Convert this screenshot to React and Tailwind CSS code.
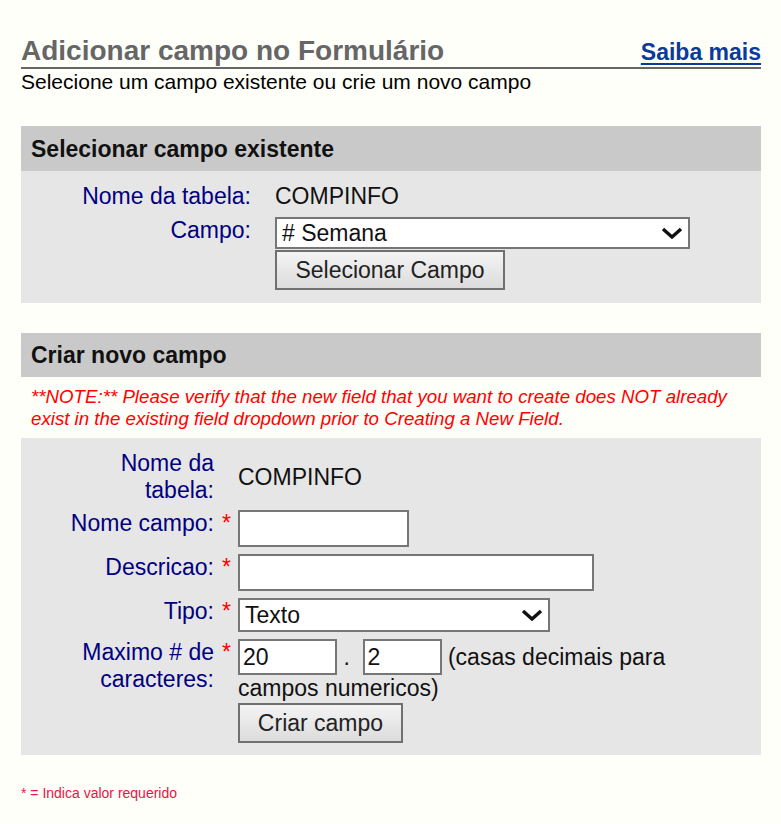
import React from "react";

function Chevron({ className }) {
  return (
    <svg className={className} width="22" height="12" viewBox="0 0 22 12" fill="none">
      <path d="M2 2 L11 10 L20 2" stroke="#111" strokeWidth="3.4" strokeLinejoin="miter" />
    </svg>
  );
}

function FakeSelect({ value, className }) {
  return (
    <div
      className={
        "flex items-center justify-between border-2 border-[#767676] bg-white pl-[5px] pr-[5px] text-[23px] leading-[26px] text-[#111] " +
        className
      }
    >
      <span>{value}</span>
      <Chevron />
    </div>
  );
}

const btn =
  "border-2 border-[#707070] bg-linear-to-b from-[#f4f4f4] to-[#dcdcdc] text-[23px] leading-[26px] text-[#222] flex items-center justify-center";

const inputCls =
  "border-2 border-[#767676] bg-white px-[3px] text-[23px] text-[#111] outline-none align-baseline";

export default function App() {
  return (
    <div className="min-h-screen bg-[#fffffa] pl-[21px] pr-[20px] pt-[35px] pb-[20px] font-['Liberation_Sans',Arial,sans-serif] text-black">
      {/* Title */}
      <div className="flex items-baseline justify-between border-b-2 border-[#666]">
        <h1 className="text-[28px] font-bold leading-[32px] text-[#666]">Adicionar campo no Formulário</h1>
        <a href="#" className="text-[23px] font-bold leading-[26px] text-[#0b3a9a] underline decoration-2 underline-offset-[3px]">
          Saiba mais
        </a>
      </div>
      <p className="text-[21px] leading-[26px]">Selecione um campo existente ou crie um novo campo</p>

      {/* Section 1 */}
      <section className="mt-[31px]">
        <div className="flex h-[45px] items-center bg-[#c9c9c9] pl-[10px] text-[23px] font-bold leading-[26px] text-[#111]">
          Selecionar campo existente
        </div>
        <div className="grid grid-cols-[230px_1fr] gap-x-6 gap-y-[8px] bg-[#e6e6e6] pt-[12px] pb-[13px] text-[23px] leading-[26.45px]">
          <div className="text-right text-[#000080]">Nome da tabela:</div>
          <div className="text-[#111]">COMPINFO</div>
          <div className="text-right text-[#000080]">Campo:</div>
          <div className="flex flex-col items-start gap-[1px]">
            <FakeSelect value="# Semana" className="h-[32px] w-[415px]" />
            <button className={btn + " h-[40px] w-[230px]"}>Selecionar Campo</button>
          </div>
        </div>
      </section>

      {/* Section 2 */}
      <section className="mt-[30px]">
        <div className="flex h-[44px] items-center bg-[#c9c9c9] pl-[10px] text-[23px] font-bold leading-[26px] text-[#111]">
          Criar novo campo
        </div>
        <p className="py-[9px] pl-[10px] text-[18.7px] italic leading-[21.5px] text-[#ff0000]">
          **NOTE:** Please verify that the new field that you want to create does NOT already
          <br />
          exist in the existing field dropdown prior to Creating a New Field.
        </p>
        <div className="grid grid-cols-[193px_24px_1fr] gap-y-[7px] bg-[#e6e6e6] pt-[12px] pb-[12px] text-[23px] leading-[26.45px]">
          <div className="text-right text-[#000080]">
            Nome da
            <br />
            tabela:
          </div>
          <div />
          <div className="self-center text-[#111]">COMPINFO</div>

          <div className="text-right text-[#000080]">Nome campo:</div>
          <div className="pl-[8px] text-[#ff0000]">*</div>
          <div>
            <input className={inputCls + " block h-[37px] w-[171px]"} />
          </div>

          <div className="text-right text-[#000080]">Descricao:</div>
          <div className="pl-[8px] text-[#ff0000]">*</div>
          <div>
            <input className={inputCls + " block h-[37px] w-[356px]"} />
          </div>

          <div className="text-right text-[#000080]">Tipo:</div>
          <div className="pl-[8px] text-[#ff0000]">*</div>
          <div>
            <FakeSelect value="Texto" className="h-[34px] w-[312px]" />
          </div>

          <div className="text-right text-[#000080]">
            Maximo # de
            <br />
            caracteres:
          </div>
          <div className="pl-[8px] text-[#ff0000]">*</div>
          <div className="text-[#111]">
            <div>
              <input className={inputCls + " inline-block h-[36px] w-[99px]"} defaultValue="20" /> .{"\u00a0 "}
              <input className={inputCls + " inline-block h-[36px] w-[79px]"} defaultValue="2" /> (casas decimais para
              <br />
              campos numericos)
            </div>
            <button className={btn + " mt-[1px] h-[40px] w-[165px]"}>Criar campo</button>
          </div>
        </div>
      </section>

      <p className="mt-[30px] text-[14px] leading-[16px] text-[#ee1144]">* = Indica valor requerido</p>
    </div>
  );
}
